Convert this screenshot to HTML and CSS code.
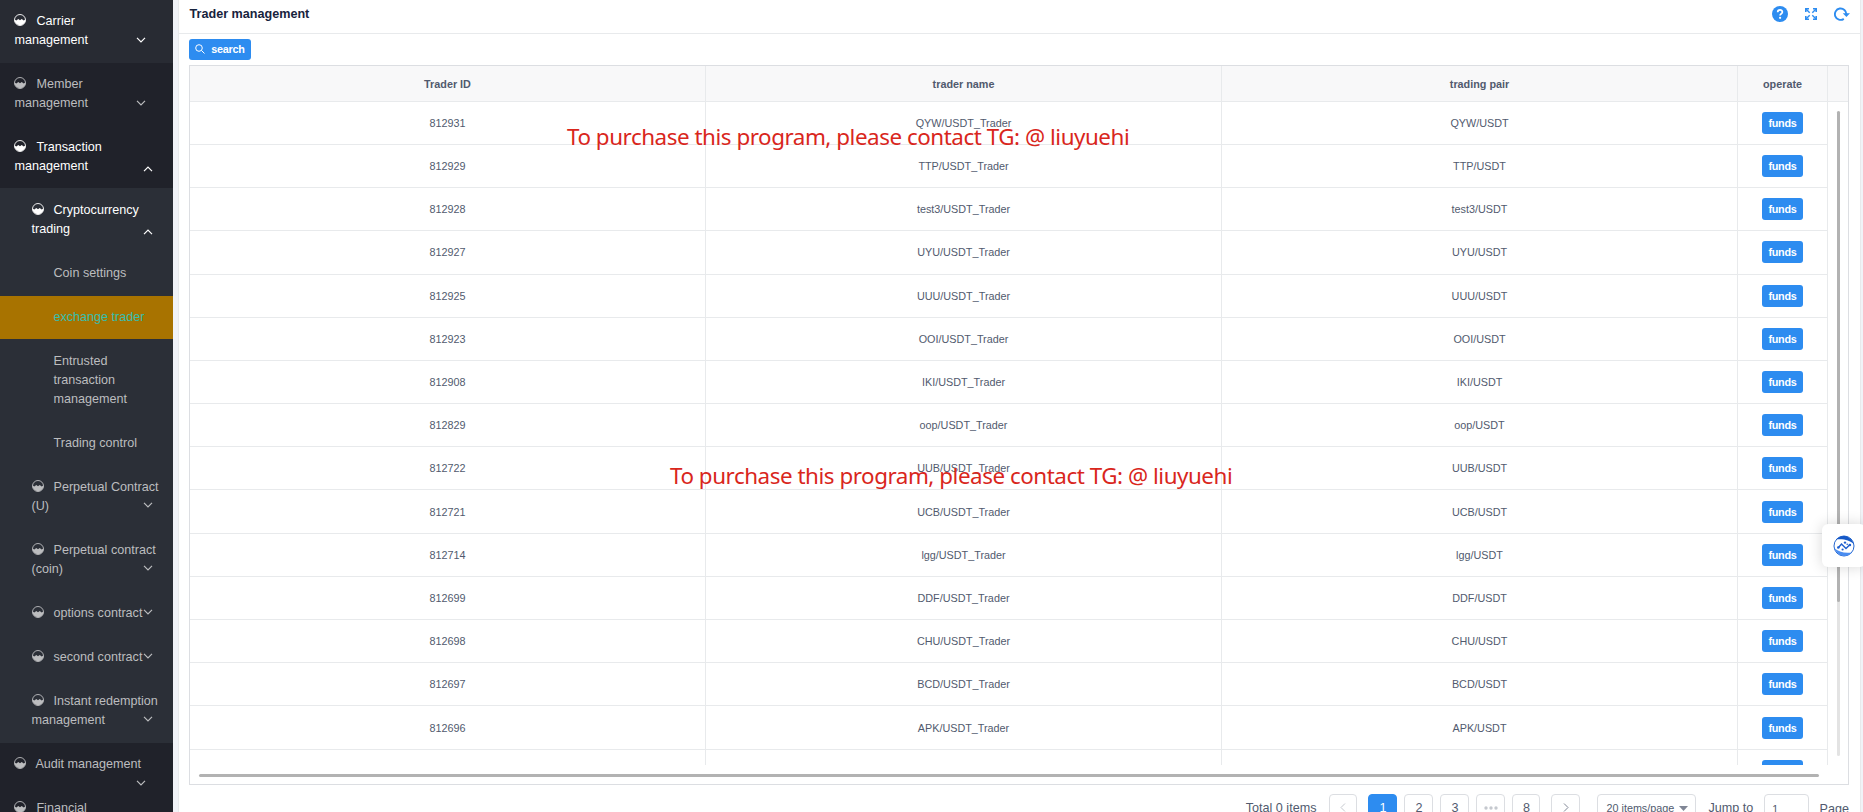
FILE: index.html
```html
<!DOCTYPE html>
<html lang="en">
<head>
<meta charset="utf-8">
<title>Trader management</title>
<link rel="stylesheet" href="styles.css">
</head>
<body>
<svg class="defs" width="0" height="0">
  <symbol id="dial" viewBox="0 0 12 12"><circle cx="6" cy="6" r="5.500" fill="none" stroke="currentColor" stroke-width=".9"/><path d="M.5 5.500 2.300 6.500 4.300 4.900 6 6.300 7.700 4.900 9.700 6.500 11.500 5.500A5.500 5.500 0 0 1 .5 6Z" fill="currentColor"/></symbol>
  <symbol id="down" viewBox="0 0 10 6"><path d="M1 .8 5 4.9 9 .8" fill="none" stroke="currentColor" stroke-width="1.2"/></symbol>
  <symbol id="up" viewBox="0 0 10 6"><path d="M1 5.2 5 1.1 9 5.2" fill="none" stroke="currentColor" stroke-width="1.2"/></symbol>
</svg>
<div class="app">
  <nav class="side">
    <div class="item top first on"><svg class="dial"><use href="#dial"/></svg>Carrier management<svg class="arrow"><use href="#down"/></svg></div>
    <div class="item top"><svg class="dial"><use href="#dial"/></svg>Member management<svg class="arrow"><use href="#down"/></svg></div>
    <div class="item top open on"><svg class="dial"><use href="#dial"/></svg>Transaction management<svg class="arrow"><use href="#up"/></svg></div>
    <div class="sub">
      <div class="item open on"><svg class="dial"><use href="#dial"/></svg>Cryptocurrency trading<svg class="arrow"><use href="#up"/></svg></div>
      <div class="item leaf coin">Coin settings</div>
      <div class="item leaf current">exchange trader</div>
      <div class="item leaf">Entrusted transaction management</div>
      <div class="item leaf">Trading control</div>
      <div class="item"><svg class="dial"><use href="#dial"/></svg>Perpetual Contract (U)<svg class="arrow"><use href="#down"/></svg></div>
      <div class="item"><svg class="dial"><use href="#dial"/></svg>Perpetual contract (coin)<svg class="arrow"><use href="#down"/></svg></div>
      <div class="item single"><svg class="dial"><use href="#dial"/></svg>options contract<svg class="arrow"><use href="#down"/></svg></div>
      <div class="item single"><svg class="dial"><use href="#dial"/></svg>second contract<svg class="arrow"><use href="#down"/></svg></div>
      <div class="item"><svg class="dial"><use href="#dial"/></svg>Instant redemption management<svg class="arrow"><use href="#down"/></svg></div>
    </div>
    <div class="item top audit"><svg class="dial"><use href="#dial"/></svg>Audit management<svg class="arrow"><use href="#down"/></svg></div>
    <div class="item top"><svg class="dial"><use href="#dial"/></svg>Financial management</div>
  </nav>
  <main class="main">
    <header class="head">
      <h1>Trader management</h1>
      <div class="tools">
        <svg width="16" height="16" viewBox="0 0 16 16"><circle cx="8" cy="8" r="8" fill="#2d8cf0"/><path d="M5.7 6.3C5.7 3.2 10.4 3.2 10.4 6.1 10.4 7.7 8.1 7.8 8.1 9.5" fill="none" stroke="#fff" stroke-width="1.7"/><circle cx="8.1" cy="11.8" r="1.1" fill="#fff"/></svg>
        <svg width="12" height="12" viewBox="0 0 12 12" fill="none" stroke="#2d8cf0"><path d="M.8 4V.8H4M8 .8h3.200V4M11.200 8v3.200H8M4 11.200H.8V8" stroke-width="1.600"/><path d="M1 1l3.700 3.700M11 1 7.300 4.700M11 11 7.300 7.300M1 11l3.700-3.700" stroke-width="1.400"/></svg>
        <svg width="16" height="14" viewBox="0 0 16 14"><path d="M9.8 11.9A5.7 5.7 0 1 1 12.3 7.5" fill="none" stroke="#2d8cf0" stroke-width="1.9"/><path d="M8.8 6.2H16L12.4 10.1Z" fill="#2d8cf0"/></svg>
      </div>
    </header>
    <button class="btn search"><svg width="10" height="10" viewBox="0 0 10 10" fill="none" stroke="#fff"><circle cx="4" cy="4" r="3.3"/><path d="M6.5 6.5 9.5 9.5"/></svg>search</button>
    <section class="table">
      <div class="row thead"><div>Trader ID</div><div>trader name</div><div>trading pair</div><div>operate</div></div>
      <div class="tbody" id="rows"></div>
      <i class="vtrack"><i class="vthumb"></i></i>
      <i class="hthumb"></i>
    </section>
    <footer class="pager">
      <span class="total">Total 0 items</span>
      <span class="pg prev"><svg width="6" height="9" viewBox="0 0 6 9"><path d="M5 .5 1 4.5 5 8.5" fill="none" stroke="#c5c8ce"/></svg></span>
      <span class="pg active">1</span><span class="pg">2</span><span class="pg">3</span>
      <span class="pg"><svg width="14" height="4" viewBox="0 0 14 4" fill="#c5c8ce"><circle cx="2" cy="2" r="1.7"/><circle cx="7" cy="2" r="1.7"/><circle cx="12" cy="2" r="1.7"/></svg></span>
      <span class="pg last">8</span>
      <span class="pg next"><svg width="6" height="9" viewBox="0 0 6 9"><path d="M1 .5 5 4.5 1 8.5" fill="none" stroke="#808695"/></svg></span>
      <span class="size">20 items/page<svg width="9" height="5" viewBox="0 0 9 5"><path d="M0 0h9L4.5 5z" fill="#808695"/></svg></span>
      <span class="jump">Jump to</span><span class="box">1</span><span>Page</span>
    </footer>
  </main>
</div>
<p class="notice one">To purchase this program, please contact TG: @ liuyuehi</p>
<p class="notice two">To purchase this program, please contact TG: @ liuyuehi</p>
<aside class="float"><svg width="22" height="22" viewBox="0 0 22 22"><circle cx="11" cy="11" r="10" fill="#fff" stroke="#2667cf" stroke-width="1"/><path d="M3 4.500C8-.8 17-.5 20.700 9 17 5.200 10 3.500 3 4.500Z" fill="#1659c7"/><path d="M19 17.500C14 22.800 5 22.500 1.300 13 5 17 12 18.500 19 17.500Z" fill="#4a8df0"/><path d="M5.500 12.500 8.500 9 13 13.500 16.500 10" fill="none" stroke="#1f5fce" stroke-width="1.500"/><g fill="#1f5fce"><circle cx="12" cy="7.600" r="1.200"/><circle cx="14.200" cy="9.300" r=".8"/><circle cx="9.600" cy="14.500" r="1.100"/><circle cx="5.300" cy="12.500" r="1.300"/><circle cx="16.900" cy="10" r="1.300"/></g></svg></aside>
<script src="rows.js"></script>
</body>
</html>
```
FILE: styles.css
```css
* { box-sizing: border-box; }
body { margin: 0; height: 812px; overflow: hidden; background: #f1f3f8; font-family: "Liberation Sans", Arial, sans-serif; font-size: 12.6px; color: #515a6e; }
.defs { position: absolute; }
.app { display: flex; height: 812px; overflow: hidden; }
.side { width: 173px; flex: none; background: #20222a; color: #bcbdbf; line-height: 18.9px; overflow: hidden; height: 812px; }
.item { position: relative; padding: 13px 12px 12.2px 31.5px; }
.item.top { padding: 12px 40px 13.2px 14.4px; }
.item.top.first { background: #282b33; }
.item.top.open { padding-bottom: 12px; }
.item.top.audit { padding-right: 20px; }
.audit .dial { margin-right: 9px; }
.on { color: #fff; }
.sub { background: #2b2f37; padding-bottom: .8px; }
.item.leaf { padding-left: 53.5px; padding-right: 25px; }
.item.coin { padding-bottom: 13.1px; }
.item.leaf.current { padding-top: 12.3px; padding-right: 12px; background: #a87300; color: #36bfae; }
.dial { width: 12px; height: 12px; margin-right: 10px; vertical-align: -1px; }
.arrow { position: absolute; width: 10px; height: 6px; left: 142.5px; top: 37px; }
.top .arrow { left: 135.5px; }
.top.open .arrow { left: 143px; top: 40px; }
.sub .open .arrow { left: 143px; top: 41px; }
.single .arrow { top: 18px; }

.main { width: 1683px; margin-left: 5px; flex: none; background: #fff; border-left: 1px solid #e8eaec; border-right: 1px solid #e8eaec; padding: 0 11px 0 10px; }
.head { display: flex; justify-content: space-between; height: 34px; margin: 0 -11px 5px -10px; padding: 0 10px 6px 10.6px; border-bottom: 1px solid #e8eaec; align-items: center; }
h1 { margin: 0; font-size: 12.6px; color: #17233d; }
.tools { display: flex; align-items: center; gap: 17px; padding-top: 1px; }
.btn { display: flex; align-items: center; justify-content: center; border: 0; padding: 0; border-radius: 3px; background: #2d8cf0; color: #fff; font: bold 10.8px "Liberation Sans", Arial, sans-serif; letter-spacing: -.25px; }
.search { width: 62px; height: 21px; gap: 6px; padding-bottom: 1px; }
.table { position: relative; margin-top: 5px; height: 720px; width: 1660px; border: 1px solid #dcdee2; font-size: 10.8px; }
.row { display: grid; grid-template-columns: 516px 516px 516px 90px 20px; height: 43.2px; }
.row > div { display: flex; align-items: center; justify-content: center; border-right: 1px solid #e8eaec; border-bottom: 1px solid #e8eaec; }
.thead { height: 35.8px; background: #f8f8f9; border-bottom: 1px solid #e8eaec; font-weight: bold; }
.thead > div { border-bottom: 0; padding-top: 1px; }
.tbody { height: 663px; overflow: hidden; }
.tbody .btn { width: 41px; height: 22px; }
.vtrack { position: absolute; left: 1647px; top: 45px; width: 3px; height: 645px; border-radius: 2px; background: #e3e3e3; }
.vthumb { display: block; height: 491px; border-radius: 2px; background: #b2b2b2; }
.hthumb { position: absolute; left: 9px; top: 708px; width: 1620px; height: 3px; border-radius: 2px; background: #b2b2b2; }
.pager { display: flex; justify-content: flex-end; align-items: center; height: 29px; margin-top: 9px; white-space: nowrap; line-height: 14px; }
.total, .jump { padding-bottom: 2px; }
.total { margin-right: 13px; }
.pg { width: 29px; height: 29px; margin-right: 7px; border: 1px solid #dcdee2; border-radius: 4px; display: flex; align-items: center; justify-content: center; padding-bottom: 2px; }
.prev { margin-right: 11px; width: 28px; }
.active { background: #2d8cf0; border-color: #2d8cf0; color: #fff; }
.last { width: 28px; }
.next { margin-left: 4px; margin-right: 17px; }
.size { width: 99px; height: 29px; border: 1px solid #dcdee2; border-radius: 4px; display: flex; align-items: center; padding: 0 7px 1px 8px; justify-content: space-between; font-size: 10.8px; margin-right: 12px; }
.jump { margin-right: 11px; }
.box { width: 45px; height: 29px; border: 1px solid #dcdee2; border-radius: 4px; padding: 7px 7px 0; font-size: 10.8px; margin-right: 10.3px; }
.notice { position: absolute; margin: 0; font: 22.4px/30px "Noto Sans", sans-serif; letter-spacing: -.46px; color: #d9261c; white-space: nowrap; }
.one { left: 567px; top: 122px; }
.two { left: 670px; top: 461px; }
.float { position: absolute; left: 1822px; top: 524px; width: 44px; height: 43px; border-radius: 6px; background: #fff; box-shadow: 0 0 14px rgba(0,0,0,.16); padding: 11px 0 0 10.5px; }
```
FILE: rows.js
```js
const rows = [
  [812931, "QYW"], [812929, "TTP"], [812928, "test3"], [812927, "UYU"],
  [812925, "UUU"], [812923, "OOI"], [812908, "IKI"], [812829, "oop"],
  [812722, "UUB"], [812721, "UCB"], [812714, "lgg"], [812699, "DDF"],
  [812698, "CHU"], [812697, "BCD"], [812696, "APK"], ["", ""]
];
document.getElementById("rows").innerHTML = rows.map(([id, coin]) => {
  const pair = coin ? coin + "/USDT" : "";
  return `<div class="row"><div>${id}</div><div>${pair && pair + "_Trader"}</div><div>${pair}</div><div><button class="btn">${coin ? "funds" : ""}</button></div></div>`;
}).join("");
```
